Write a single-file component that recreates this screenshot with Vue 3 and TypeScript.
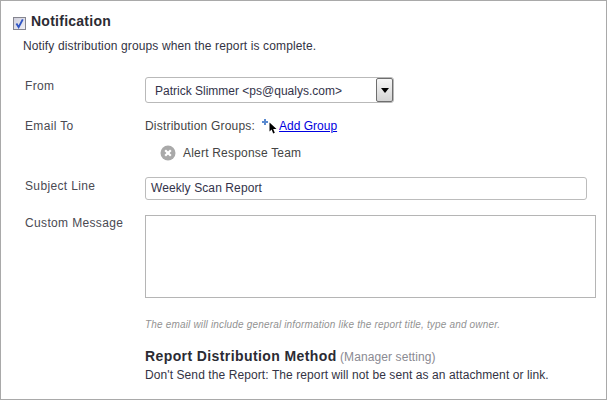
<script setup lang="ts">
const title = 'Notification'
</script>

<template>
  <div class="frame">
    <div class="head">
      <span class="check">
        <svg width="11" height="11" viewBox="0 0 10 10"><path d="M2.2 5 L4.2 8.3 L8 1.2" fill="none" stroke="#2f55c4" stroke-width="1.7" /></svg>
      </span>
      <span class="title">{{ title }}</span>
    </div>
    <p class="intro">Notify distribution groups when the report is complete.</p>
    <div class="form">
      <div class="label from-label">From</div>
      <div class="select">
        <span class="select-text">Patrick Slimmer &lt;ps@qualys.com&gt;</span>
        <span class="select-btn"><i class="arrow"></i></span>
      </div>

      <div class="label email-label">Email To</div>
      <div class="email">
        <div class="groups">
          <span>Distribution Groups:</span>
          <svg class="plus" width="6" height="6" viewBox="0 0 6 6"><path d="M3 0V6M0 3H6" stroke="#5a8ad0" stroke-width="2" /></svg>
          <svg class="cursor" width="8" height="12" viewBox="0 0 8 12"><path d="M0.5 0.5V9.5L2.6 7.6L4.2 11.5L5.8 10.8L4.2 7H7.5Z" fill="#000" /></svg>
          <a class="link" href="#">Add Group</a>
        </div>
        <div class="member">
          <svg width="16" height="16" viewBox="0 0 16 16"><circle cx="8" cy="8" r="7.5" fill="#a9a9a9" /><path d="M5.2 5.2L10.8 10.8M10.8 5.2L5.2 10.8" stroke="#fff" stroke-width="2.2" /></svg>
          <span>Alert Response Team</span>
        </div>
      </div>

      <div class="label subject-label">Subject Line</div>
      <div class="input">Weekly Scan Report</div>

      <div class="label message-label">Custom Message</div>
      <div class="textarea"></div>

      <div></div>
      <div class="hint">The email will include general information like the report title, type and owner.</div>

      <div></div>
      <div class="method">
        <div class="method-title"><b>Report Distribution Method</b> <span>(Manager setting)</span></div>
        <div class="method-text">Don't Send the Report: The report will not be sent as an attachment or link.</div>
      </div>
    </div>
  </div>
</template>

<style>
html, body { margin: 0; background: #fff; }
</style>

<style scoped>
.frame {
  box-sizing: border-box;
  width: 607px;
  height: 400px;
  border: 1px solid #a9a9a9;
  overflow: hidden;
  padding: 11px 0 0 12px;
  font-family: "Liberation Sans", Arial, sans-serif;
  font-size: 12px;
  color: #333;
  background: #fff;
}
.head { display: flex; align-items: center; gap: 5px; height: 18px; }
.check {
  box-sizing: border-box;
  width: 13px;
  height: 13px;
  margin-top: 5px;
  border: 1px solid #85858f;
  background: linear-gradient(135deg, #cfcfdc, #f0f0f6);
  display: flex;
  align-items: center;
  justify-content: center;
}
.title { font-size: 14px; font-weight: bold; color: #2b2b33; letter-spacing: 0.25px; }
.intro { margin: 9px 0 0 10px; line-height: 15px; color: #333344; letter-spacing: 0.13px; }
.form {
  display: grid;
  grid-template-columns: 120px 442px;
  margin: 23px 0 0 12px;
  color: #444;
}
.label { letter-spacing: 0.35px; line-height: 15px; color: #4a4a52; }
.from-label { padding-top: 2px; }
.select {
  box-sizing: border-box;
  width: 249px;
  height: 26px;
  border: 1px solid #b9b9b9;
  border-radius: 3px;
  display: flex;
  align-items: center;
  justify-content: space-between;
  padding-left: 9px;
  color: #33334a;
}
.select-text { padding-top: 2px; }
.groups, .member { letter-spacing: 0.2px; }
.input { letter-spacing: 0.1px; }
.select-btn {
  box-sizing: border-box;
  width: 17px;
  height: 24px;
  border: 1px solid #6e6e6e;
  border-radius: 2px;
  background: linear-gradient(#f6f6f6, #d4d4d4);
  display: flex;
  align-items: center;
  justify-content: center;
}
.arrow { border: 4px solid transparent; border-top: 5px solid #000; border-bottom: 0; }
.email-label { padding-top: 16px; }
.email { padding-top: 15px; height: 59px; }
.groups { display: flex; align-items: center; height: 15px; color: #444; }
.plus { margin: -7px 0 0 7px; }
.cursor { margin: 2px 0 -2px 1px; }
.link { color: #0000e0; margin-left: 2px; letter-spacing: 0; }
.member { display: flex; align-items: center; gap: 7px; margin: 12px 0 0 15px; height: 16px; color: #444; }
.subject-label { margin-top: 2px; }
.input {
  box-sizing: border-box;
  width: 442px;
  height: 23px;
  border: 1px solid #bcbcbc;
  border-radius: 3px;
  padding-left: 5px;
  line-height: 21px;
  color: #33334a;
}
.message-label { padding-top: 16px; }
.textarea {
  box-sizing: border-box;
  width: 451px;
  height: 83px;
  margin-top: 15px;
  border: 1px solid #b5b5b5;
}
.hint { margin-top: 21px; font-size: 10px; font-style: italic; line-height: 12px; color: #929292; letter-spacing: 0.17px; white-space: nowrap; }
.method { margin-top: 17px; white-space: nowrap; }
.method-title { line-height: 16px; }
.method-title b { font-size: 14px; color: #2b2b33; letter-spacing: 0.4px; }
.method-title span { color: #8a8a92; letter-spacing: 0.1px; }
.method-text { line-height: 16px; margin-top: 2px; color: #333344; letter-spacing: 0.09px; }
</style>
